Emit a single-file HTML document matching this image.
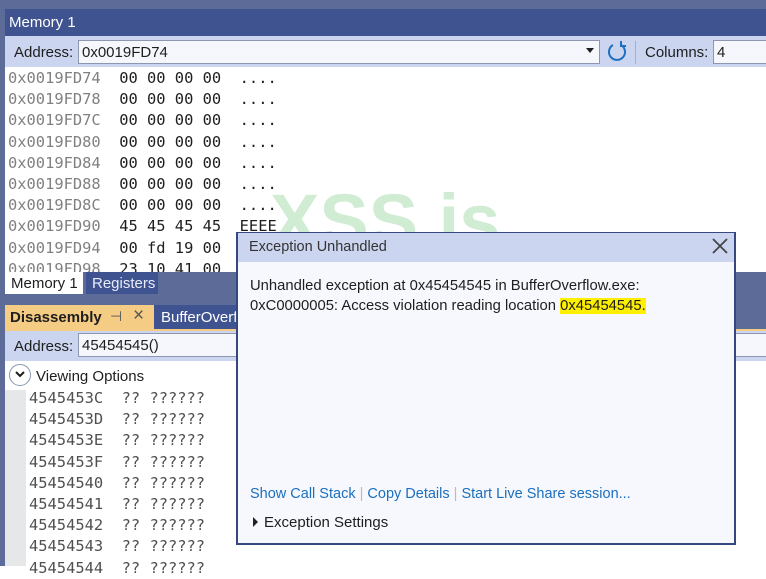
<!DOCTYPE html><html><head><style>
*{margin:0;padding:0;box-sizing:border-box}
body{width:766px;height:566px;overflow:hidden;background:#fff;position:relative;font-family:"Liberation Sans",sans-serif;font-size:14px;color:#1e1e1e}
.a{position:absolute}
.m{font-family:"DejaVu Sans Mono",monospace;font-size:15.4px;white-space:pre;line-height:21.2px}
</style></head><body>
<div class="a" style="left:0;top:0;width:766px;height:566px;background:#5d6b99"></div>
<div class="a" style="left:5px;top:9px;width:761px;height:27px;background:#405391;color:#fff;font-size:15px;padding:5px 0 0 4px">Memory 1</div>
<div class="a" style="left:5px;top:36px;width:761px;height:31px;background:#ccd5f0"></div>
<div class="a" style="left:14px;top:44px;font-size:15px">Address:</div>
<div class="a" style="left:78px;top:40px;width:522px;height:24px;background:#f5f7fd;border:1px solid #8e96b0;font-size:15px;padding:3px 0 0 3px">0x0019FD74</div>
<div class="a" style="left:586px;top:48px;width:0;height:0;border-left:4px solid transparent;border-right:4px solid transparent;border-top:5px solid #1e1e1e"></div>
<svg class="a" style="left:606px;top:40px" width="22" height="24" viewBox="0 0 22 24"><path d="M7 5 A8 8 0 1 0 15 5" fill="none" stroke="#1e6fc0" stroke-width="2"/><path d="M15 1 L15 6 L20 6" fill="none" stroke="#1e6fc0" stroke-width="2"/></svg>
<div class="a" style="left:635px;top:41px;width:1px;height:23px;background:#9fb0d0"></div>
<div class="a" style="left:645px;top:44px;font-size:15px">Columns:</div>
<div class="a" style="left:713px;top:40px;width:60px;height:24px;background:#f5f7fd;border:1px solid #8e96b0;font-size:15px;padding:3px 0 0 3px">4</div>
<div class="a" style="left:5px;top:67px;width:761px;height:205px;background:#fff;overflow:hidden">
<div class="m" style="position:absolute;left:3px;top:1px"><span style="color:#808080">0x0019FD74</span>  00 00 00 00  ....
<span style="color:#808080">0x0019FD78</span>  00 00 00 00  ....
<span style="color:#808080">0x0019FD7C</span>  00 00 00 00  ....
<span style="color:#808080">0x0019FD80</span>  00 00 00 00  ....
<span style="color:#808080">0x0019FD84</span>  00 00 00 00  ....
<span style="color:#808080">0x0019FD88</span>  00 00 00 00  ....
<span style="color:#808080">0x0019FD8C</span>  00 00 00 00  ....
<span style="color:#808080">0x0019FD90</span>  45 45 45 45  EEEE
<span style="color:#808080">0x0019FD94</span>  00 fd 19 00  ..
<span style="color:#808080">0x0019FD98</span>  23 10 41 00  </div></div>
<div class="a" style="left:5px;top:272px;width:78px;height:22px;background:#fff;font-size:15px;padding:3px 0 0 6px">Memory 1</div>
<div class="a" style="left:86px;top:272px;width:72px;height:22px;background:#405391;color:#e8ecf8;font-size:15px;padding:3px 0 0 6px">Registers</div>
<div class="a" style="left:5px;top:305px;width:149px;height:26px;background:#f5cc84;font-size:15px;font-weight:bold;padding:4px 0 0 5px">Disassembly</div>
<div class="a" style="left:110px;top:308px;font-size:14px;color:#555">⊣</div>
<div class="a" style="left:133px;top:305px;font-size:19px;color:#555">×</div>
<div class="a" style="left:154px;top:305px;width:90px;height:26px;background:#405391;color:#fff;font-size:15px;padding:4px 0 0 7px">BufferOverf</div>
<div class="a" style="left:5px;top:329px;width:761px;height:2px;background:#f5cc84"></div>
<div class="a" style="left:5px;top:331px;width:761px;height:30px;background:#ccd5f0"></div>
<div class="a" style="left:14px;top:338px;font-size:15px">Address:</div>
<div class="a" style="left:78px;top:333px;width:700px;height:24px;background:#f5f7fd;border:1px solid #8e96b0;font-size:15px;padding:3px 0 0 3px">45454545()</div>
<div class="a" style="left:5px;top:361px;width:761px;height:205px;background:#fff"></div>
<div class="a" style="left:9px;top:364px;width:22px;height:22px;border:1px solid #8896b0;border-radius:50%;background:#fff"></div>
<svg class="a" style="left:13px;top:370px" width="14" height="10"><path d="M3 2 L7 6 L11 2" fill="none" stroke="#1e1e1e" stroke-width="2"/></svg>
<div class="a" style="left:36px;top:368px;font-size:15px">Viewing Options</div>
<div class="a" style="left:5px;top:390px;width:21px;height:176px;background:#e6e7e8"></div>
<div class="m a" style="left:29px;top:388px;color:#505050">4545453C  ?? ??????
4545453D  ?? ??????
4545453E  ?? ??????
4545453F  ?? ??????
45454540  ?? ??????
45454541  ?? ??????
45454542  ?? ??????
45454543  ?? ??????
45454544  ?? ??????</div>
<div class="a" style="left:270px;top:178px;font-size:74px;font-weight:bold;color:rgba(120,200,130,0.35)">XSS.is</div>
<div class="a" style="left:236px;top:232px;width:500px;height:313px;background:#f7f8fd;border:2px solid #36487f;border-top:1px solid #36487f"></div>
<div class="a" style="left:238px;top:233px;width:496px;height:29px;background:#ccd5f0"></div>
<div class="a" style="left:249px;top:239px;font-size:14.5px;color:#333">Exception Unhandled</div>
<svg class="a" style="left:711px;top:237px" width="18" height="18"><path d="M2 2 L16 16 M16 2 L2 16" stroke="#444" stroke-width="1.8"/></svg>
<div class="a" style="left:250px;top:276px;font-size:14.8px;line-height:20px">Unhandled exception at 0x45454545 in BufferOverflow.exe:<br>0xC0000005: Access violation reading location <span style="background:#fff000">0x45454545.</span></div>
<div class="a" style="left:250px;top:486px;font-size:14.5px;color:#1a6fbf">Show Call Stack <span style="color:#bbb">|</span> Copy Details <span style="color:#bbb">|</span> Start Live Share session...</div>
<div class="a" style="left:253px;top:517px;width:0;height:0;border-top:5px solid transparent;border-bottom:5px solid transparent;border-left:5px solid #222"></div>
<div class="a" style="left:264px;top:514px;font-size:15px">Exception Settings</div>
</body></html>
